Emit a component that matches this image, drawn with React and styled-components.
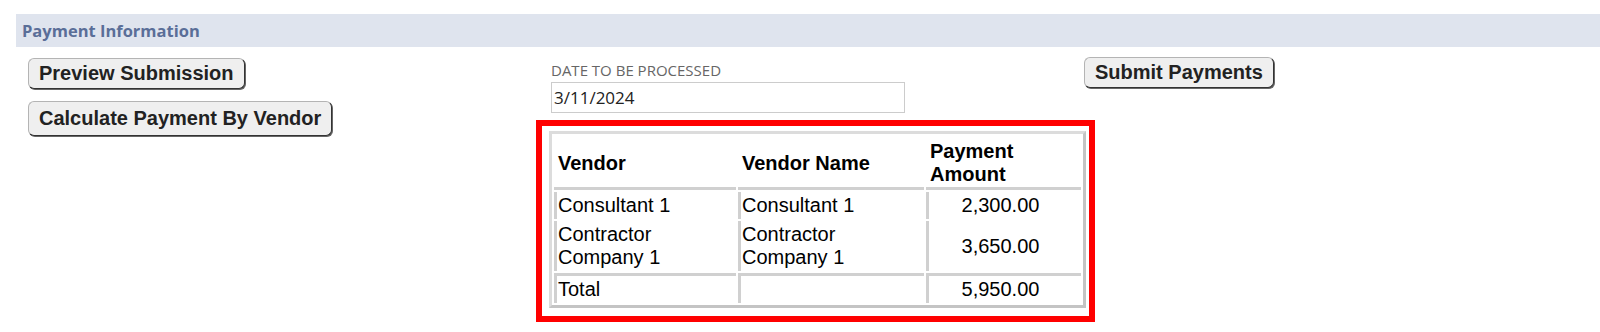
import React from "react"
import styled, { createGlobalStyle } from "styled-components"

const payments = [
  { vendor: "Consultant 1", name: "Consultant 1", amount: "2,300.00" },
  { vendor: "Contractor Company 1", name: "Contractor Company 1", amount: "3,650.00" },
]

const App = () => (
  <Page>
    <GlobalStyle />
    <SectionBar>Payment Information</SectionBar>
    <Body>
      <ActionColumn>
        <Button $h={31}>Preview Submission</Button>
        <Button $h={35}>Calculate Payment By Vendor</Button>
      </ActionColumn>

      <MiddleColumn>
        <DateField>
          <Label>Date to be processed</Label>
          <DateInput defaultValue="3/11/2024" />
        </DateField>
        <Highlight>
          <Table>
            <colgroup>
              <Col $w={182} />
              <Col $w={186} />
              <Col $w={155} />
            </colgroup>
            <thead>
              <tr>
                <Th>Vendor</Th>
                <Th>Vendor Name</Th>
                <Th>Payment Amount</Th>
              </tr>
            </thead>
            <tbody>
              {payments.map((p) => (
                <tr key={p.vendor}>
                  <Td>{p.vendor}</Td>
                  <Td>{p.name}</Td>
                  <Td $amount>{p.amount}</Td>
                </tr>
              ))}
              <tr>
                <Td $total>Total</Td>
                <Td $total />
                <Td $total $amount>5,950.00</Td>
              </tr>
            </tbody>
          </Table>
        </Highlight>
      </MiddleColumn>

      <div>
        <Button $h={31}>Submit Payments</Button>
      </div>
    </Body>
  </Page>
)

const GlobalStyle = createGlobalStyle`
  body {
    margin: 0;
    background: #fff;
    font-family: "Liberation Sans", Arial, sans-serif;
  }
`

const Page = styled.div`
  padding: 14px 0 0 16px;
`

const SectionBar = styled.div`
  height: 33px;
  display: flex;
  align-items: center;
  padding-left: 6px;
  background: #dfe4ee;
  font-family: "Open Sans", sans-serif;
  font-weight: 700;
  font-size: 16.5px;
  color: #5a6e98;
`

const Body = styled.div`
  display: grid;
  grid-template-columns: 508px 548px auto;
  margin-top: 10px;
  padding-left: 12px;
`

const ActionColumn = styled.div`
  display: flex;
  flex-direction: column;
  align-items: flex-start;
  gap: 12px;
  padding-top: 1px;
`

const Button = styled.button`
  height: ${(p) => p.$h}px;
  padding: 0 10px;
  font-family: "Liberation Sans", Arial, sans-serif;
  font-weight: 700;
  font-size: 20px;
  color: #222;
  background: #efefef;
  border: 1px solid;
  border-color: #b4b4b4 #333 #333 #b4b4b4;
  border-radius: 6px;
  box-shadow: 1px 1px 0 #666;
  white-space: nowrap;
`

const MiddleColumn = styled.div`
  padding-top: 3px;
`

const DateField = styled.div`
  padding-left: 15px;
`

const Label = styled.div`
  font-family: "Open Sans", sans-serif;
  font-size: 15px;
  line-height: 20px;
  color: #666;
  text-transform: uppercase;
`

const DateInput = styled.input`
  display: block;
  box-sizing: border-box;
  width: 354px;
  height: 31px;
  margin-top: 2px;
  padding: 0 2px;
  border: 1px solid #ccc;
  font-family: "Open Sans", sans-serif;
  font-size: 17px;
  color: #222;
  outline: none;
`

const Highlight = styled.div`
  box-sizing: border-box;
  width: 559px;
  margin-top: 7px;
  padding: 5px 3px 8px 7px;
  border: 6px solid #ff0000;
`

const Table = styled.table`
  width: 537px;
  table-layout: fixed;
  border-collapse: separate;
  border-spacing: 2px;
  border: 3px solid;
  border-color: #dcdcdc #c4c4c4 #c4c4c4 #dcdcdc;
  font-family: "Liberation Sans", Arial, sans-serif;
  font-size: 20px;
  line-height: 23px;
  color: #000;
`

const Col = styled.col`
  width: ${(p) => p.$w}px;
`

const Th = styled.th`
  padding: 4px 4px 1px;
  text-align: left;
  vertical-align: middle;
  font-weight: 700;
  border-bottom: 3px solid #d0d0d0;
`

const Td = styled.td`
  padding: ${(p) => (p.$amount ? "2px 10px 2px 1px" : "2px 4px 2px 1px")};
  vertical-align: middle;
  text-align: ${(p) => (p.$amount ? "center" : "left")};
  border-left: 3px solid #d0d0d0;
  border-top: ${(p) => (p.$total ? "3px solid #d0d0d0" : "0")};
`

export default App
